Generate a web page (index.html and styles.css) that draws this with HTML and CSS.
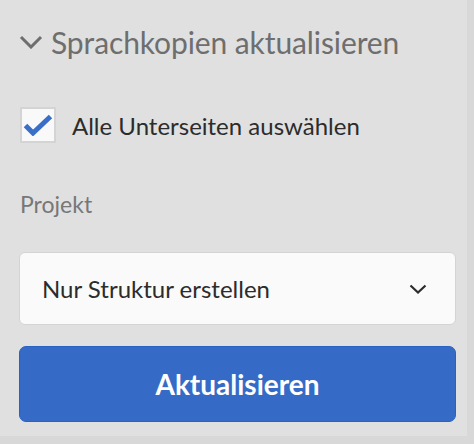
FILE: index.html
```html
<!DOCTYPE html>
<html lang="de">
<head>
<meta charset="utf-8">
<link rel="stylesheet" href="styles.css">
</head>
<body>
<div class="panel">
  <div class="heading">
    <svg class="heading-chevron" width="24" height="14" viewBox="0 0 24 14"><path d="M2 2 L12 12 L22 2" fill="none" stroke="#6e6e6e" stroke-width="3"/></svg>
    <span class="heading-text">Sprachkopien aktualisieren</span>
  </div>
  <label class="check-row">
    <span class="checkbox">
      <svg width="30" height="22" viewBox="0 0 30 22"><path d="M2.5 11.5 L10 19 L27.5 2.5" fill="none" stroke="#3a6fc8" stroke-width="5" stroke-linejoin="miter"/></svg>
    </span>
    <span class="check-label">Alle Unterseiten auswählen</span>
  </label>
  <div class="field-label">Projekt</div>
  <div class="select">
    <span class="select-text">Nur Struktur erstellen</span>
    <svg class="select-chevron" width="18" height="10" viewBox="0 0 18 10"><path d="M1.5 1.5 L9 8.5 L16.5 1.5" fill="none" stroke="#2c2c2c" stroke-width="2.2"/></svg>
  </div>
  <button class="primary">Aktualisieren</button>
</div>
</body>
</html>
```
FILE: styles.css
```css
html, body {
  margin: 0;
  padding: 0;
}
body {
  background: #d8d8d8;
  width: 474px;
  height: 444px;
  font-family: Lato, "Noto Sans", sans-serif;
}
.panel {
  width: 467px;
  height: 436px;
  background: #e0e0e0;
  box-sizing: border-box;
  padding: 24px 11px 0 19px;
  display: flex;
  flex-direction: column;
}
.heading {
  display: flex;
  align-items: center;
  height: 36px;
  color: #6e6e6e;
}
.heading-chevron {
  margin-left: 0;
  margin-right: 8px;
}
.heading-text {
  font-size: 30px;
  line-height: 36px;
  letter-spacing: -0.1px;
}
.check-row {
  display: flex;
  align-items: center;
  margin-top: 47px;
  height: 36px;
}
.checkbox {
  width: 32px;
  height: 32px;
  margin-left: 1px;
  border: 2px solid #d4d4d4;
  background: #f9f9f9;
  display: flex;
  align-items: center;
  justify-content: center;
}
.check-label {
  margin-left: 16px;
  font-size: 24px;
  color: #2c2c2c;
}
.field-label {
  margin-top: 47px;
  font-size: 23px;
  line-height: 28px;
  color: #777;
  padding-left: 1px;
}
.select {
  margin-top: 34px;
  height: 73px;
  box-sizing: border-box;
  border: 1px solid #d4d4d4;
  border-radius: 6px;
  background: #fafafa;
  display: flex;
  align-items: center;
  padding: 0 28px 0 22px;
}
.select-text {
  flex: 1;
  font-size: 24px;
  color: #2c2c2c;
}
.primary {
  margin-top: 21px;
  height: 76px;
  border: 1px solid #2b61c0;
  border-radius: 7px;
  background: #356bc7;
  color: #fff;
  font-family: Lato, "Noto Sans", sans-serif;
  font-weight: 700;
  font-size: 28px;
  padding: 0;
}
```
